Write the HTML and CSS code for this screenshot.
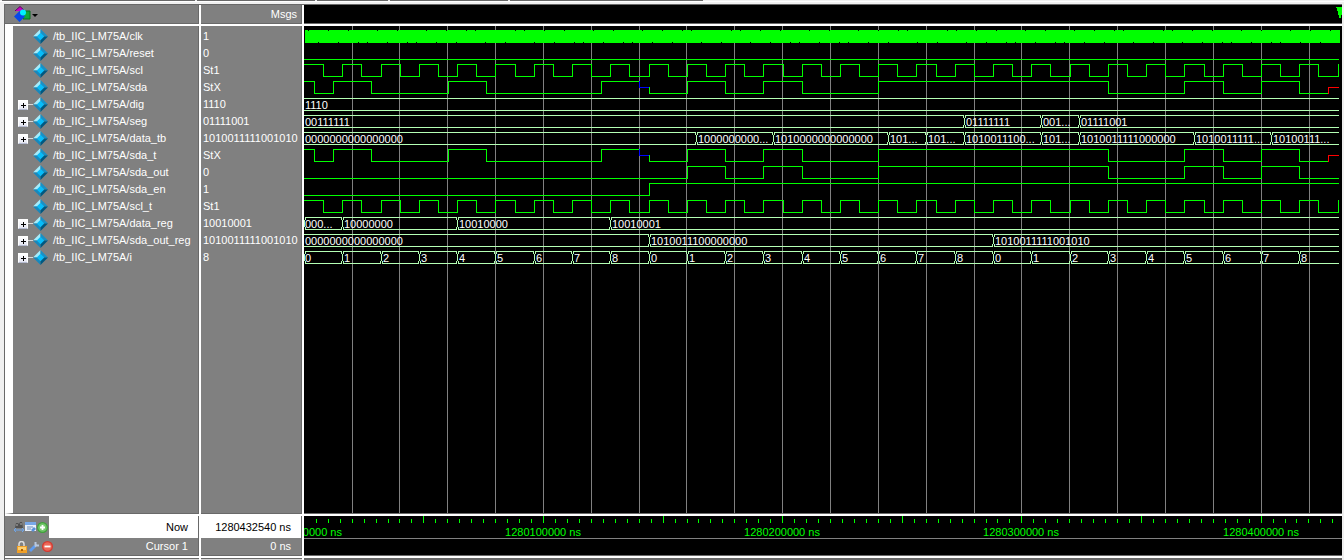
FILE: index.html
```html
<!DOCTYPE html>
<html lang="en">

<head>
  <meta charset="UTF-8">
  <meta name="viewport" content="width=device-width, initial-scale=1">
  <title>Wave</title>
  <link rel="stylesheet" href="styles.css">
</head>

<body>

  <svg class="defs" aria-hidden="true">
    <symbol id="signal" viewBox="0 0 16 16">
      <path d="M8 0L8 8L0 8Z" fill="#a4ecfc"/>
      <path d="M8 0L16 8L8 8Z" fill="#1a90c4"/>
      <path d="M0 8L8 8L8 16Z" fill="#1888bc"/>
      <path d="M16 8L8 16L8 8Z" fill="#005880"/>
      <path d="M8 4L12 8L8 12L4 8Z" fill="#08bcf8"/>
    </symbol>
  </svg>

  <div class="tabs"><span class="tab wide"></span><span class="tab"></span><span class="tab small"></span><span class="tab"></span><span class="tab wide"></span></div>

  <main class="wave">
    <header class="cell head">
      <button class="menu" aria-label="Objects">
        <svg width="24" height="16" viewBox="0 0 24 16">
          <path d="M1 5L6 0.500L11 5" fill="#c800c8" stroke="#600060"/>
          <path d="M9 5h7v8h-7z" fill="#10a838" stroke="#087020"/>
          <path d="M5.500 5L11 10.500L5.500 16L0 10.500Z" fill="#0848e8"/>
          <circle cx="9" cy="6.500" r="3" fill="#00f0ff"/>
          <path d="M18 8h6l-3 3z" fill="#000"/>
        </svg>
      </button>
    </header>
    <header class="cell head msgs">Msgs</header>
    <header class="cell black top">
      <svg class="marker" width="6" height="11" viewBox="0 0 6 11"><path d="M0 0H6V8H5V11H3V8H2V4H1V1H0Z" fill="#0f0"/></svg>
    </header>

    <section class="cell names"><ul id="names"></ul></section>
    <section class="cell values"><ul id="values"></ul></section>
    <section class="cell black"><svg id="waves" class="plot"></svg></section>

    <footer class="cell foot">
      <div class="now">
        <div class="tools">
          <button aria-label="Find"><svg width="10" height="10" viewBox="0 0 10 10"><path d="M2 1h2l1 1 1-2h2l1 6H1z" fill="#505050"/><path d="M2 3h2M6 2h2" stroke="#aaa"/><path d="M0 8h10M2 6L0 8L2 10M8 6L10 8L8 10" fill="none" stroke="#6fa5e8"/></svg></button>
          <button aria-label="Edit"><svg width="11" height="10" viewBox="0 0 11 10"><path d="M0 0h11v9H0z" fill="#e8f0fb"/><path d="M0 0h11v3H0z" fill="#78a8e8"/><path d="M2 5h6M2 7h4" stroke="#7090b8"/><path d="M6 8l3-3 2 2-3 3z" fill="#5890d8"/></svg></button>
          <button aria-label="Add cursor"><svg width="11" height="11" viewBox="0 0 11 11"><circle cx="5.500" cy="5.500" r="5.500" fill="#3fa23a"/><circle cx="5.500" cy="5.500" r="4.300" fill="#74c66c"/><path d="M5.500 3v5M3 5.500h5" stroke="#fff" stroke-width="1.800"/></svg></button>
        </div>
        <span class="label">Now</span>
      </div>
      <div class="cursor">
        <div class="tools">
          <button aria-label="Lock"><svg width="10" height="12" viewBox="0 0 10 12"><path d="M2 6V3a2.500 2.500 0 0 1 5 0v2" fill="none" stroke="#ddd" stroke-width="1.500"/><path d="M0 5h10v7H0z" fill="#f0a028"/><path d="M1 6h8v3H1z" fill="#ffd070"/><path d="M4 8h2v2H4z" fill="#a86008"/></svg></button>
          <button aria-label="Settings"><svg width="11" height="11" viewBox="0 0 11 11"><path d="M1 10L6 5" stroke="#5f9cf0" stroke-width="2.800"/><path d="M6 5.500L8 3.500M6.500 1v3.500H10" fill="none" stroke="#b8c8e0" stroke-width="2"/></svg></button>
          <button aria-label="Remove cursor"><svg width="11" height="11" viewBox="0 0 11 11"><circle cx="5.500" cy="5.500" r="5.500" fill="#d43a30"/><circle cx="5.500" cy="5.500" r="4.300" fill="#ec6858"/><path d="M2.500 5.500h6" stroke="#fff" stroke-width="1.800"/></svg></button>
        </div>
        <span class="label">Cursor 1</span>
      </div>
    </footer>
    <footer class="cell foot">
      <div class="now"><span class="label">1280432540 ns</span></div>
      <div class="cursor"><span class="label">0 ns</span></div>
    </footer>
    <footer class="cell black foot">
      <div class="ruler"><svg id="ruler" class="plot"></svg></div>
    </footer>

    <div class="edge"></div>
    <div class="edge"></div>
    <div class="edge dark"></div>
  </main>

  <script src="wave.js"></script>

</body>

</html>
```
FILE: styles.css
```css
html,
body {
  height: 100%;
}

body {
  background: #F0F0F0;
  color: #FFF;
  display: flex;
  flex-direction: column;
  font-family: "Liberation Sans", Arial, sans-serif;
  font-size: 11px;
  line-height: 17px;
  margin: 0;
  overflow: hidden;
}

ul {
  list-style: none;
  margin: 0;
  padding: 0;
}

button {
  background: none;
  border: 0;
  cursor: pointer;
  display: block;
  flex: none;
  padding: 0;
}

svg {
  display: block;
}

.defs {
  height: 0;
  position: absolute;
  width: 0;
}

.tabs {
  border-bottom: 1px solid #FFF;
  display: flex;
  gap: 2px;
  height: 1px;
  margin-bottom: 2px;
  padding-left: 2px;
}

.tab {
  background: #696969;
  width: 118px;
}

.tab.wide {
  width: 193px;
}

.tab.small {
  width: 71px;
}

.wave {
  background: #FFF;
  border-left: 1px solid #696969;
  border-top: 1px solid #696969;
  display: grid;
  flex: 1;
  gap: 2px;
  grid-template-columns: 194px 101px minmax(0, 1fr);
  grid-template-rows: 19px minmax(0, 1fr) 40px 2px;
  margin: 0 2px 0 4px;
  min-height: 0;
}

.cell {
  background: #808080;
  border-bottom: 1px solid #696969;
  border-right: 1px solid #696969;
  min-width: 0;
  overflow: hidden;
}

.head {
  align-items: center;
  display: flex;
  padding: 0 4px 0 9px;
}

.msgs {
  justify-content: flex-end;
}

.black {
  background: #000;
  border-right: 0;
}

.top {
  display: flex;
  justify-content: flex-end;
  padding-top: 2px;
}

.names {
  border-left: 8px solid #FFF;
}

.names ul,
.values ul {
  padding-top: 2px;
}

.names li {
  align-items: center;
  display: flex;
  height: 17px;
  padding-left: 5px;
  white-space: nowrap;
}

.values li {
  height: 17px;
  padding-left: 2px;
  white-space: nowrap;
}

.icon {
  flex: none;
  height: 15px;
  margin-right: 5px;
  width: 15px;
}

.leaf {
  flex: none;
  width: 15px;
}

.expand {
  background: linear-gradient(#FFF, #E4E6F2);
  border: 1px solid #FFF;
  border-bottom-color: #B4BAD0;
  height: 10px;
  width: 10px;
}

.stem {
  background: #D8D8D8;
  flex: none;
  height: 1px;
  width: 5px;
}

.plot {
  height: 100%;
  overflow: hidden;
  width: 100%;
}

.expand path,
.plot path,
.plot line,
.plot rect {
  shape-rendering: crispEdges;
}

.plot path,
.plot line {
  fill: none;
  stroke: #0F0;
}

.plot .grid {
  stroke: #808080;
}

.plot .bus {
  stroke: #B4FFB4;
}

.plot .z {
  stroke: #00F;
}

.plot .x {
  stroke: #F00;
}

.plot .clk {
  fill: #0F0;
}

.plot text {
  fill: #FFF;
}

.plot .time {
  fill: #0F0;
  text-anchor: middle;
}

.now,
.cursor {
  align-items: center;
  display: flex;
}

.now {
  background: #FFF;
  color: #000;
  height: 22px;
}

.cursor {
  height: 17px;
}

.tools {
  align-items: center;
  align-self: stretch;
  background: #808080;
  box-sizing: border-box;
  display: flex;
  gap: 1px;
  padding-left: 9px;
  width: 44px;
}

.cursor .tools {
  gap: 2px;
  padding-left: 12px;
  width: 48px;
}

.label {
  margin-left: auto;
  padding-right: 10px;
}

.ruler {
  border-bottom: 1px solid #808080;
  height: 22px;
}

.edge {
  background: #D8D8D8;
  border-top: 1px solid #696969;
  height: 1px;
}

.edge.dark {
  background: #696969;
}
```
FILE: wave.js
```javascript
var $$ = document.querySelector.bind(document);

// half period of scl, all edges below are counted in it
var HALF = 19.14;
var END = 1035;
var ROW = 17;
var HI = 2;
var MID = 8;
var LO = 14;

var scl = [];
for (var n = 0; n <= 54; n++) {
  scl.push([n, n % 2 ? 0 : 1]);
}
var sda = [[0, 1], [0.5, 0], [1.5, 1], [3.5, 0], [7.5, 1], [9.5, 0], [15.5, 1], [17.5, 'z'], [18, 0],
  [20, 1], [22, 0], [24, 1], [26, 0], [30, 1], [42, 0], [46, 1], [48, 0], [50, 1], [52, 0], [53.5, 'x']];
var count = [];
for (n = 0; n < 27; n++) {
  count.push([n * 2, String(n % 9)]);
}

var signals = [
  { name: 'clk', value: '1', clk: true },
  { name: 'reset', value: '0', wave: [[0, 0]] },
  { name: 'scl', value: 'St1', wave: scl },
  { name: 'sda', value: 'StX', wave: sda },
  { name: 'dig', value: '1110', bus: [[0, '1110']] },
  { name: 'seg', value: '01111001', bus: [[0, '00111111'], [34.5, '01111111'], [38.5, '001...'], [40.5, '01111001']] },
  { name: 'data_tb', value: '1010011111001010', bus: [[0, '0000000000000000'], [20.5, '1000000000...'],
    [24.5, '1010000000000000'], [30.5, '101...'], [32.5, '101...'], [34.5, '1010011100...'], [38.5, '101...'],
    [40.5, '1010011111000000'], [46.5, '1010011111...'], [50.5, '10100111...']] },
  { name: 'sda_t', value: 'StX', wave: sda },
  { name: 'sda_out', value: '0', wave: [[0, 0], [20, 1], [22, 0], [24, 1], [26, 0], [30, 1], [42, 0], [46, 1], [48, 0], [50, 1], [52, 0]] },
  { name: 'sda_en', value: '1', wave: [[0, 0], [18, 1]] },
  { name: 'scl_t', value: 'St1', wave: scl },
  { name: 'data_reg', value: '10010001', start: true, bus: [[0, '000...'], [2, '10000000'], [8, '10010000'], [16, '10010001']] },
  { name: 'sda_out_reg', value: '1010011111001010', bus: [[0, '0000000000000000'], [18, '1010011100000000'], [36, '1010011111001010']] },
  { name: 'i', value: '8', start: true, bus: count }
];

function toX(t) {
  return Math.round(t * HALF);
}

function drawWave(wave) {
  var levels = { 0: LO, 1: HI, z: MID, x: MID };
  var out = '';
  var last = null;
  wave.forEach(function (step, i) {
    var x = toX(step[0]);
    var y = levels[step[1]];
    var end = i + 1 < wave.length ? toX(wave[i + 1][0]) : END - 1;
    var cls = typeof step[1] === 'string' ? step[1] : 'line';
    var d = last === null ? 'M' + x + ' ' + y : 'M' + x + ' ' + last + 'V' + y;
    out += '<path class="' + cls + '" d="' + d + 'H' + end + '" stroke-linecap="square"/>';
    last = y;
  });
  return out;
}

function drawBus(signal) {
  var lines = '';
  var edges = '';
  var text = '';
  signal.bus.forEach(function (step, i) {
    var x = toX(step[0]);
    var end = i + 1 < signal.bus.length ? toX(signal.bus[i + 1][0]) : END;
    var cross = i > 0 || signal.start;
    var from = cross ? x + 1 : 0;
    lines += 'M' + from + ' 2.5H' + end + 'M' + from + ' 14.5H' + end;
    if (cross) {
      edges += 'M' + (x - 0.5) + ' 2v3m2 0v-3M' + (x + 0.5) + ' 5v7M' + (x - 0.5) + ' 12v3m2 0v-3';
    }
    text += '<text x="' + (x + (i ? 2 : 1)) + '" y="13">' + step[1] + '</text>';
  });
  return '<path class="bus" d="' + lines + edges + '"/>' + text;
}

function drawClk() {
  var top = [4, 24, 44, 73, 93, 122, 142, 162, 171, 211];
  var bottom = [14, 34, 54, 63, 83, 103, 112, 132, 152, 181, 201];
  var out = '<rect class="clk" x="1" y="2" width="1035" height="13"/>';
  for (var x = 0; x < END; x += 216) {
    top.forEach(function (t) {
      if (x + t < END) out += '<rect x="' + (x + t) + '" y="2" width="1" height="1"/>';
    });
    bottom.forEach(function (t) {
      if (x + t < END) out += '<rect x="' + (x + t) + '" y="14" width="1" height="1"/>';
    });
  }
  return out;
}

var names = '';
var values = '';
var plot = '';

for (n = 0; n < 21; n++) {
  var gx = Math.round(47.5 + n * 47.85) + 0.5;
  plot += '<line class="grid" x1="' + gx + '" x2="' + gx + '" y1="0" y2="100%"/>';
}

signals.forEach(function (signal, i) {
  names += '<li>' + (signal.bus ? '<button class="expand" aria-label="Expand ' + signal.name + '">' +
    '<svg width="8" height="8" viewBox="0 0 8 8"><path d="M2 4.500h5M4.500 2v5" stroke="#000"/></svg></button><span class="stem"></span>' : '<span class="leaf"></span>') +
    '<svg class="icon"><use href="#signal"/></svg>/tb_IIC_LM75A/' + signal.name + '</li>';
  values += '<li>' + signal.value + '</li>';
  plot += '<g transform="translate(0 ' + (2 + i * ROW) + ')">';
  if (signal.clk) {
    plot += drawClk();
  } else if (signal.bus) {
    plot += drawBus(signal);
  } else {
    plot += '<g transform="translate(.5 .5)">' + drawWave(signal.wave) + '</g>';
  }
  plot += '</g>';
});

$$('#names').innerHTML = names;
$$('#values').innerHTML = values;
$$('#waves').innerHTML = plot;

var ruler = '';
for (n = 0; n <= 86; n++) {
  var tx = Math.round(n * 11.96 - 0.2) + 0.5;
  if (n) {
    ruler += '<line x1="' + tx + '" x2="' + tx + '" y1="' + (n % 10 ? 3 : 0) + '" y2="7"/>';
  }
  if (n % 20 === 0) {
    ruler += '<text class="time" x="' + Math.floor(tx) + '" y="20">' + (1280000000 + n * 5000) + ' ns</text>';
  }
}
$$('#ruler').innerHTML = ruler;
```
